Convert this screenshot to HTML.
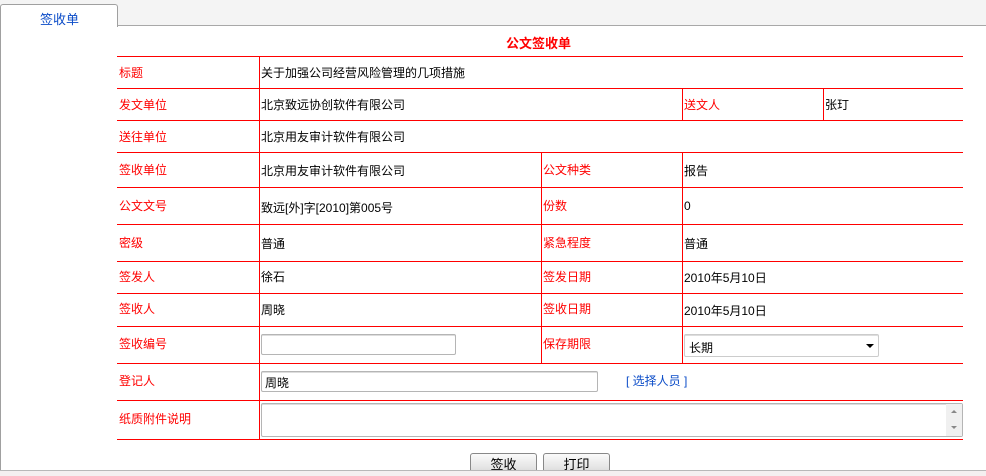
<!DOCTYPE html>
<html><head><meta charset="utf-8"><style>
*{margin:0;padding:0;box-sizing:border-box}
body{width:986px;height:476px;overflow:hidden;background:#fff;position:relative;font-family:"Liberation Sans","Noto Sans CJK SC","WenQuanYi Zen Hei",sans-serif;font-size:12px;color:#000}
.a{position:absolute}
.h{position:absolute;height:1px;background:#f00;left:117px;width:846px}
.v{position:absolute;width:1px;background:#f00}
.l{position:absolute;color:#f00;left:119px;white-space:nowrap}
.t{position:absolute;white-space:nowrap}
.inp{position:absolute;border:1px solid #b5b5b5;border-radius:2px;background:#fff;box-shadow:inset 0 1px 0 #ddd}
.btn{position:absolute;top:453px;height:20px;width:67px;border:1px solid #888;border-bottom:none;border-radius:3px 3px 0 0;background:linear-gradient(#fafafa,#e8e8e8 60%,#d8d8d8);text-align:center;line-height:21px;font-size:13px}
</style></head><body>
<div class="a" style="left:0;top:0;width:986px;height:26px;background:#f4f4f4;border-bottom:1px solid #a8a8a8"></div>
<div class="a" style="left:0;top:4px;width:118px;height:23px;background:#fff;border:1px solid #a0a0a0;border-bottom:none;border-radius:3px 3px 0 0"></div>
<div class="a" style="left:0;top:26px;width:1px;height:445px;background:#a0a0a0"></div>
<div class="t" style="left:40px;top:9px;color:#0b4cc8;font-size:13px">签收单</div>
<div class="t" style="left:506px;top:33px;color:#f00;font-weight:bold;font-size:13px">公文签收单</div>

<div class="h" style="top:56px"></div><div class="h" style="top:88px"></div><div class="h" style="top:120px"></div><div class="h" style="top:152px"></div><div class="h" style="top:187px"></div><div class="h" style="top:224px"></div><div class="h" style="top:261px"></div><div class="h" style="top:293px"></div><div class="h" style="top:326px"></div><div class="h" style="top:363px"></div><div class="h" style="top:400px"></div><div class="h" style="top:439px"></div>
<div class="v" style="left:259px;top:56px;height:384px"></div>
<div class="v" style="left:682px;top:88px;height:33px"></div>
<div class="v" style="left:823px;top:88px;height:33px"></div>
<div class="v" style="left:541px;top:152px;height:212px"></div>
<div class="v" style="left:682px;top:152px;height:212px"></div>

<div class="l" style="top:64px">标题</div><div class="t" style="left:261px;top:64px">关于加强公司经营风险管理的几项措施</div>
<div class="l" style="top:96px">发文单位</div><div class="t" style="left:261px;top:96px">北京致远协创软件有限公司</div>
<div class="l" style="left:684px;top:96px">送文人</div><div class="t" style="left:825px;top:96px">张玎</div>
<div class="l" style="top:128px">送往单位</div><div class="t" style="left:261px;top:128px">北京用友审计软件有限公司</div>
<div class="l" style="top:161px">签收单位</div><div class="t" style="left:261px;top:162px">北京用友审计软件有限公司</div>
<div class="l" style="left:543px;top:161px">公文种类</div><div class="t" style="left:684px;top:162px">报告</div>
<div class="l" style="top:197px">公文文号</div><div class="t" style="left:261px;top:199px">致远[外]字[2010]第005号</div>
<div class="l" style="left:543px;top:197px">份数</div><div class="t" style="left:684px;top:199px">0</div>
<div class="l" style="top:234px">密级</div><div class="t" style="left:261px;top:235px">普通</div>
<div class="l" style="left:543px;top:234px">紧急程度</div><div class="t" style="left:684px;top:235px">普通</div>
<div class="l" style="top:268px">签发人</div><div class="t" style="left:261px;top:268px">徐石</div>
<div class="l" style="left:543px;top:268px">签发日期</div><div class="t" style="left:684px;top:269px">2010年5月10日</div>
<div class="l" style="top:300px">签收人</div><div class="t" style="left:261px;top:301px">周晓</div>
<div class="l" style="left:543px;top:300px">签收日期</div><div class="t" style="left:684px;top:302px">2010年5月10日</div>
<div class="l" style="top:335px">签收编号</div><div class="inp" style="left:261px;top:334px;width:195px;height:21px"></div>
<div class="l" style="left:543px;top:335px">保存期限</div>
<div class="inp" style="left:684px;top:334px;width:195px;height:23px;border-color:#ccc"></div>
<div class="t" style="left:689px;top:339px">长期</div>
<div class="a" style="left:866px;top:344px;width:0;height:0;border-left:4px solid transparent;border-right:4px solid transparent;border-top:4px solid #000"></div>
<div class="l" style="top:372px">登记人</div><div class="inp" style="left:261px;top:371px;width:337px;height:21px"></div>
<div class="t" style="left:265px;top:374px">周晓</div>
<div class="t" style="left:626px;top:372px;color:#0b4cc8">[ 选择人员 ]</div>
<div class="l" style="top:410px">纸质附件说明</div>
<div class="inp" style="left:261px;top:403px;width:702px;height:34px"></div>
<div class="a" style="left:946px;top:404px;width:16px;height:32px;background:#f0f0f0"></div>
<div class="a" style="left:951px;top:410px;border-left:3px solid transparent;border-right:3px solid transparent;border-bottom:3px solid #888"></div>
<div class="a" style="left:951px;top:426px;border-left:3px solid transparent;border-right:3px solid transparent;border-top:3px solid #888"></div>

<div class="btn" style="left:470px">签收</div>
<div class="btn" style="left:543px">打印</div>
<div class="a" style="left:0;top:470px;width:986px;height:6px;background:#f4f0f0;border-top:1px solid #b8b8b8"></div>
</body></html>
